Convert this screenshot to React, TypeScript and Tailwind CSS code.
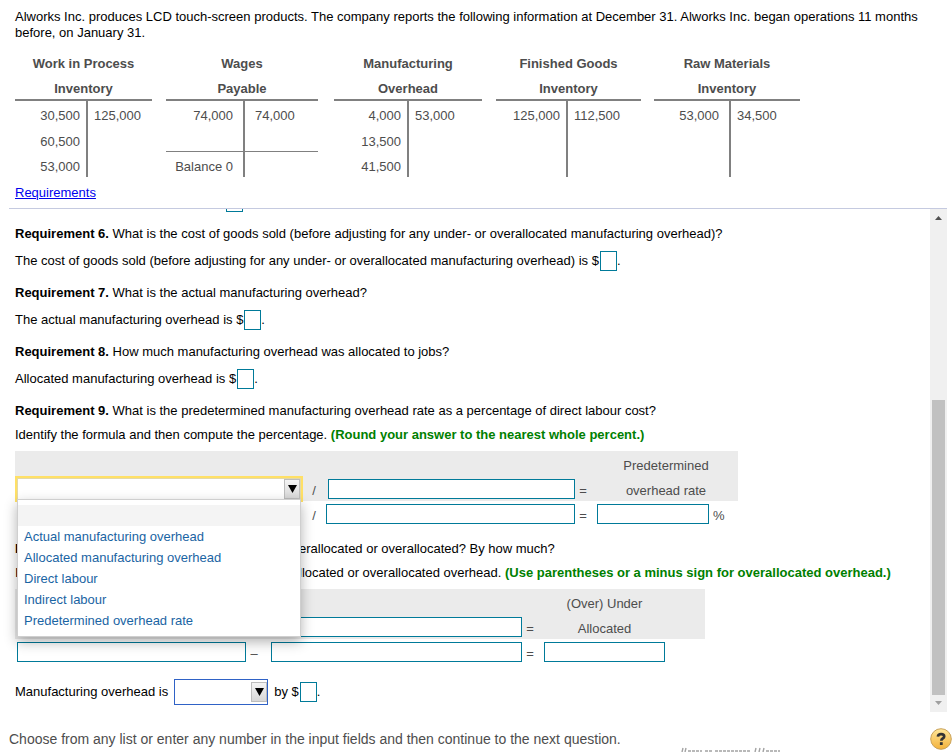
import type React from "react"

type Account = {
    title: [string, string]
    left: string[]
    right: string[]
    widths: [string, string]
    pads: [string, string]
    ruled?: boolean
    gap: string
}

const accounts: Account[] = [
    {
        title: ["Work in Process", "Inventory"],
        left: ["30,500", "60,500", "53,000"],
        right: ["125,000", "", ""],
        widths: ["w-[73px]", "w-[64px]"],
        pads: ["pr-1.5", "pl-1.5"],
        gap: "mr-3.5",
    },
    {
        title: ["Wages", "Payable"],
        left: ["74,000", "", "Balance 0"],
        right: ["74,000", "", ""],
        widths: ["w-[79px]", "w-[73px]"],
        pads: ["pr-2.5", "pl-2.5"],
        ruled: true,
        gap: "mr-4",
    },
    {
        title: ["Manufacturing", "Overhead"],
        left: ["4,000", "13,500", "41,500"],
        right: ["53,000", "", ""],
        widths: ["w-[75px]", "w-[73px]"],
        pads: ["pr-1.5", "pl-1.5"],
        gap: "mr-3.5",
    },
    {
        title: ["Finished Goods", "Inventory"],
        left: ["125,000", "", ""],
        right: ["112,500", "", ""],
        widths: ["w-[72px]", "w-[73px]"],
        pads: ["pr-1.5", "pl-1.5"],
        gap: "mr-[13px]",
    },
    {
        title: ["Raw Materials", "Inventory"],
        left: ["53,000", "", ""],
        right: ["34,500", "", ""],
        widths: ["w-[77px]", "w-[69px]"],
        pads: ["pr-2.5", "pl-1.5"],
        gap: "",
    },
]

const formulaOptions = [
    "Actual manufacturing overhead",
    "Allocated manufacturing overhead",
    "Direct labour",
    "Indirect labour",
    "Predetermined overhead rate",
]

const TAccount: React.FC<{ account: Account }> = ({ account }) => (
    <table className={`border-separate border-spacing-0 text-[#4d4d4d] ${account.gap}`}>
        <thead>
            <tr>
                <th colSpan={2} className="p-0 font-bold leading-[25px]">
                    {account.title[0]}
                </th>
            </tr>
            <tr>
                <th colSpan={2} className="border-b-2 border-[#808080] p-0 pt-0.5 font-bold leading-[21px]">
                    {account.title[1]}
                </th>
            </tr>
        </thead>
        <tbody>
            {account.left.map((value, i) => {
                const height = i === 0 ? "h-[26px] pt-[3px]" : "h-[25px] pt-[5px]"
                const rule = account.ruled && i === 1 ? "border-b border-b-[#808080]" : ""
                return (
                    <tr key={i}>
                        <td
                            className={`border-r-2 border-r-[#808080] pb-0 pl-0 text-right ${height} ${account.widths[0]} ${account.pads[0]} ${rule}`}
                        >
                            {value}
                        </td>
                        <td className={`pr-0 pb-0 ${height} ${account.widths[1]} ${account.pads[1]} ${rule}`}>
                            {account.right[i]}
                        </td>
                    </tr>
                )
            })}
        </tbody>
    </table>
)

const Field: React.FC<{ label: string; width: string }> = ({ label, width }) => (
    <input type="text" aria-label={label} className={`block h-5 border border-[#007a99] bg-white px-1 ${width}`} />
)

const SmallField: React.FC<{ id: string }> = ({ id }) => (
    <input id={id} type="text" className="ml-px h-5 w-[17px] border border-[#007a99] bg-white" />
)

const Arrow: React.FC = () => (
    <span className="pointer-events-none absolute inset-y-0 right-0 flex w-4 items-center justify-center border border-[#bdbdbd] bg-linear-to-b from-[#f4f4f4] to-[#d8d8d8]">
        <svg width="9" height="8" viewBox="0 0 9 8">
            <path d="M0 0h9L4.5 8z" fill="#000" />
        </svg>
    </span>
)

const Question: React.FC<{ n: number; text: string; id: string; answer: string }> = ({ n, text, id, answer }) => (
    <div className="mb-[5px]">
        <p className="leading-[27px]">
            <b>Requirement {n}.</b> {text}
        </p>
        <div className="flex h-[27px] items-center">
            <label htmlFor={id}>{answer}</label>
            <SmallField id={id} />
            <span>.</span>
        </div>
    </div>
)

const FormulaSelect: React.FC = () => (
    <div className="relative ml-0.5 w-[284px]">
        <div className="relative h-[22px] border border-[#e3d9a8] bg-white outline-2 outline-[#ffe066]">
            <select aria-label="Formula numerator" className="block h-full w-full appearance-none bg-white px-1 outline-none">
                <option></option>
                {formulaOptions.map((option) => (
                    <option key={option}>{option}</option>
                ))}
            </select>
            <Arrow />
        </div>
        <ul
            role="listbox"
            aria-label="Formula choices"
            className="absolute inset-x-0 top-[21px] z-10 border border-[#cfcfcf] bg-white py-[5px] leading-[21px] text-[#1a64a3] shadow-[0_5px_12px_rgba(0,0,0,0.3)]"
        >
            <li role="option" aria-selected="true" className="h-[21px] bg-[#f4f4f4]"></li>
            {formulaOptions.map((option) => (
                <li key={option} role="option" aria-selected="false" className="px-1.5">
                    {option}
                </li>
            ))}
        </ul>
    </div>
)

const Sign: React.FC<{ children: string }> = ({ children }) => <td className="p-0 pt-1 text-center">{children}</td>

const RateTable: React.FC = () => (
    <table className="w-[723px] table-fixed border-collapse text-[#4d4d4d]">
        <colgroup>
            <col className="w-[289px]" />
            <col className="w-[20px]" />
            <col className="w-[252px]" />
            <col className="w-[14px]" />
            <col />
        </colgroup>
        <thead className="bg-[#ebebeb]">
            <tr className="h-[25px]">
                <td className="p-0" colSpan={4}></td>
                <th className="p-0 pt-1 pl-1 font-normal">Predetermined</th>
            </tr>
            <tr className="h-[25px]">
                <td className="p-0">
                    <FormulaSelect />
                </td>
                <Sign>/</Sign>
                <td className="p-0">
                    <Field label="Formula denominator" width="ml-auto mr-px w-[247px]" />
                </td>
                <Sign>=</Sign>
                <th className="p-0 pt-1 pl-1 font-normal">overhead rate</th>
            </tr>
        </thead>
        <tbody>
            <tr className="h-[25px]">
                <td className="p-0">
                    <Field label="Numerator amount" width="ml-0.5 w-[280px]" />
                </td>
                <Sign>/</Sign>
                <td className="p-0">
                    <Field label="Denominator amount" width="ml-auto mr-px w-[249px]" />
                </td>
                <Sign>=</Sign>
                <td className="p-0">
                    <div className="flex items-center gap-1 pl-[7px]">
                        <Field label="Predetermined overhead rate" width="w-28" />
                        <span className="pt-1">%</span>
                    </div>
                </td>
            </tr>
        </tbody>
    </table>
)

const AllocationTable: React.FC = () => (
    <table className="w-[690px] table-fixed border-collapse text-[#4d4d4d]">
        <colgroup>
            <col className="w-[231px]" />
            <col className="w-[16px]" />
            <col className="w-[261px]" />
            <col className="w-[14px]" />
            <col className="w-[135px]" />
            <col />
        </colgroup>
        <thead className="bg-[#ebebeb]">
            <tr className="h-[25px]">
                <td className="p-0" colSpan={4}></td>
                <th className="p-0 pt-1 font-normal">(Over) Under</th>
                <td className="p-0"></td>
            </tr>
            <tr className="h-[25px]">
                <td className="p-0">
                    <Field label="First overhead term" width="ml-0.5 w-[229px]" />
                </td>
                <Sign>–</Sign>
                <td className="p-0">
                    <Field label="Second overhead term" width="ml-auto mr-px w-[251px]" />
                </td>
                <Sign>=</Sign>
                <th className="p-0 pt-1 font-normal">Allocated</th>
                <td className="p-0"></td>
            </tr>
        </thead>
        <tbody>
            <tr className="h-[25px]">
                <td className="p-0">
                    <Field label="First overhead amount" width="ml-0.5 w-[229px]" />
                </td>
                <Sign>–</Sign>
                <td className="p-0">
                    <Field label="Second overhead amount" width="ml-auto mr-px w-[251px]" />
                </td>
                <Sign>=</Sign>
                <td className="p-0">
                    <Field label="Over or under allocated amount" width="ml-[7px] w-[121px]" />
                </td>
                <td className="p-0"></td>
            </tr>
        </tbody>
    </table>
)

const ScrollBar: React.FC = () => (
    <div className="flex w-[17px] shrink-0 flex-col items-center bg-[#f0f0f0]" aria-hidden="true">
        <svg className="mt-[7px]" width="7" height="4" viewBox="0 0 7 4">
            <path d="M3.5 0L7 4H0z" fill="#505050" />
        </svg>
        <div className="grow" />
        <div className="h-[295px] w-[13px] bg-[#c1c1c1]" />
        <svg className="mt-1.5 mb-[7px]" width="7" height="4" viewBox="0 0 7 4">
            <path d="M0 0h7L3.5 4z" fill="#a0a0a0" />
        </svg>
    </div>
)

const App: React.FC = () => {
    return (
        <div className="relative h-screen overflow-hidden bg-white font-['Liberation_Sans',Arial,sans-serif] text-[13px] leading-4 text-black">
            <header className="px-[15px] pt-[9px]">
                <p>
                    Alworks Inc. produces LCD touch-screen products. The company reports the following information at
                    December 31. Alworks Inc. began operations 11 months before, on January 31.
                </p>
                <div className="mt-2.5 flex items-start">
                    {accounts.map((account) => (
                        <TAccount key={account.title.join(" ")} account={account} />
                    ))}
                </div>
                <a href="#requirements" className="mt-2 block w-fit text-[#0000ee] underline">
                    Requirements
                </a>
            </header>

            <main className="mt-[7px] mr-[5px] ml-[9px] flex border-t border-[#c5cae0]">
                <div className="min-w-0 grow pb-1.5 pl-1.5">
                    <div className="mb-2 flex h-[3px] items-end overflow-hidden pl-[211px]">
                        <input aria-label="Requirement 5 answer" type="text" className="h-5 w-[17px] shrink-0 border border-[#007a99]" />
                    </div>
                    <Question
                        n={6}
                        id="cogs"
                        text="What is the cost of goods sold (before adjusting for any under- or overallocated manufacturing overhead)?"
                        answer="The cost of goods sold (before adjusting for any under- or overallocated manufacturing overhead) is $"
                    />
                    <Question
                        n={7}
                        id="actual"
                        text="What is the actual manufacturing overhead?"
                        answer="The actual manufacturing overhead is $"
                    />
                    <Question
                        n={8}
                        id="allocated"
                        text="How much manufacturing overhead was allocated to jobs?"
                        answer="Allocated manufacturing overhead is $"
                    />
                    <p className="leading-[27px]">
                        <b>Requirement 9.</b> What is the predetermined manufacturing overhead rate as a percentage of
                        direct labour cost?
                    </p>
                    <p className="mb-[5px] leading-[22px]">
                        Identify the formula and then compute the percentage.{" "}
                        <b className="text-[#008000]">(Round your answer to the nearest whole percent.)</b>
                    </p>
                    <RateTable />

                    <p className="mt-[11px] leading-6">
                        <b>Requirement 10.</b> Is manufacturing overhead underallocated or overallocated? By how much?
                    </p>
                    <p className="mb-1 leading-6">
                        Identify the formula and then compute the underallocated or overallocated overhead.{" "}
                        <b className="text-[#008000]">(Use parentheses or a minus sign for overallocated overhead.)</b>
                    </p>
                    <AllocationTable />

                    <div className="mt-3.5 flex h-7 items-center">
                        <label htmlFor="direction">Manufacturing overhead is</label>
                        <div className="relative mx-1.5 h-[26px] w-[94px] border border-[#2f62c6] p-0.5">
                            <select id="direction" className="block h-full w-full appearance-none bg-white outline-none">
                                <option></option>
                                <option>underallocated</option>
                                <option>overallocated</option>
                            </select>
                            <div className="absolute inset-y-0.5 right-0 w-4">
                                <Arrow />
                            </div>
                        </div>
                        <label htmlFor="difference">by $</label>
                        <SmallField id="difference" />
                        <span>.</span>
                    </div>
                </div>
                <ScrollBar />
            </main>

            <footer className="mt-4 flex items-center justify-between pl-[9px]">
                <p className="text-sm leading-5 text-[#4d4d4d]">
                    Choose from any list or enter any number in the input fields and then continue to the next question.
                </p>
                <button type="button" aria-label="Help">
                    <svg width="22" height="22" viewBox="0 0 22 22">
                        <defs>
                            <linearGradient id="help" x1="0" y1="0" x2="0" y2="1">
                                <stop offset="0" stopColor="#ffe79a" />
                                <stop offset="1" stopColor="#f3b13a" />
                            </linearGradient>
                        </defs>
                        <circle cx="11" cy="11" r="10.3" fill="url(#help)" stroke="#c9a25a" />
                        <path d="M7.9 8.6c.2-1.7 1.5-2.5 3.2-2.5 1.8 0 3.1.9 3.1 2.3 0 2.1-2.9 1.9-2.9 4.3" fill="none" stroke="#333" strokeWidth="2.7" />
                        <path d="M9.9 14.2h2.8v2.8H9.9z" fill="#333" />
                    </svg>
                </button>
            </footer>

            {/* top edge of the line that runs off below the window */}
            <svg className="absolute right-[168px] bottom-0" width="104" height="5" viewBox="0 0 104 5" aria-hidden="true">
                <g fill="none" stroke="#a3a3a3" strokeWidth="1.4" className="blur-[0.5px]">
                    <path d="M3 1L2 5M6 1L5 5M76 1l-1 4M80 1l-1 4M84 1l-1 4" />
                    <path d="M8 4h14M25 4h7M35 4h36M86 4h14" strokeDasharray="3 1" />
                </g>
            </svg>
        </div>
    )
}

export default App
